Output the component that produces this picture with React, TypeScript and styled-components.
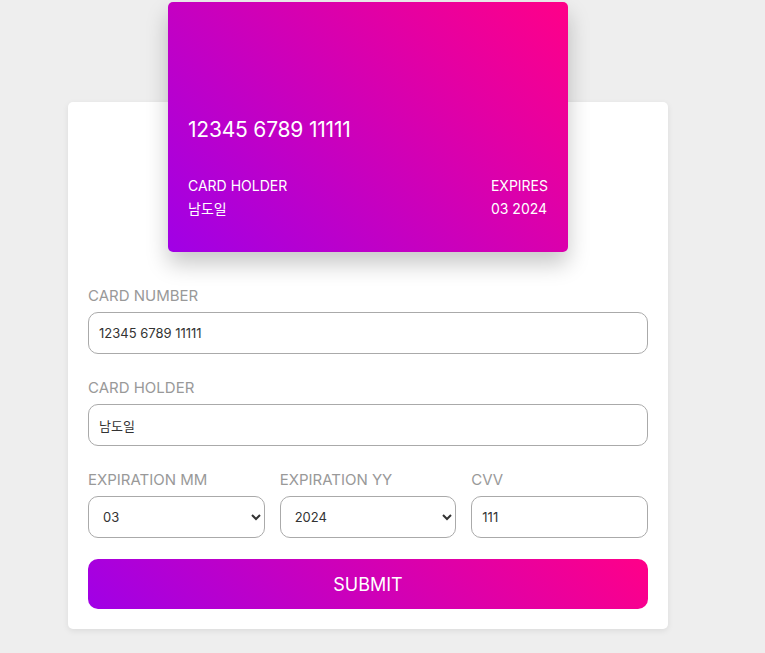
import React from "react";
import styled, { createGlobalStyle } from "styled-components";

const Global = createGlobalStyle`
  html, body { margin: 0; padding: 0; }
  body {
    background: #eeeeee;
    font-family: "Inter", "Noto Sans CJK KR", sans-serif;
  }
  * { box-sizing: border-box; }
`;

const gradient = "linear-gradient(45deg, #a000e6 0%, #ff0088 100%)";

const Page = styled.div`
  padding: 102px 0 24px 68px;
  min-height: 653px;
`;

const Container = styled.form`
  width: 600px;
  background: #fff;
  border-radius: 5px;
  padding: 20px;
  box-shadow: 0 2px 6px rgba(0, 0, 0, 0.08);
  display: flex;
  flex-direction: column;
`;

const Card = styled.div`
  width: 400px;
  height: 250px;
  margin: -120px auto 33px;
  border-radius: 5px;
  background: ${gradient};
  box-shadow: 0 12px 22px rgba(0, 0, 0, 0.22);
  color: #fff;
  padding: 20px 20px 33px;
  display: flex;
  flex-direction: column;
  justify-content: flex-end;
`;

const CardNumber = styled.div`
  font-size: 21px;
  line-height: 30px;
  letter-spacing: -0.2px;
  margin-bottom: 31px;
`;

const CardRow = styled.div`
  display: flex;
  justify-content: space-between;
`;

const CardCol = styled.div`
  display: flex;
  flex-direction: column;
  gap: 3px;
  font-size: 14px;
  line-height: 20px;
`;

const Group = styled.div`
  display: flex;
  flex-direction: column;
  gap: 5px;
  margin-bottom: 23px;
`;

const Row = styled.div`
  display: grid;
  grid-template-columns: 1fr 1fr 1fr;
  gap: 15px;
  margin-bottom: -2px;
`;

const Label = styled.label`
  font-size: 15px;
  line-height: 22px;
  color: #999;
`;

const Input = styled.input`
  height: 42px;
  width: 100%;
  border: 1px solid #aaa;
  border-radius: 10px;
  padding: 0 10px;
  font-family: "Inter", "Noto Sans CJK KR", sans-serif;
  font-size: 13px;
  color: #333;
  background: #fff;
  outline: none;
`;

const Select = styled.select`
  height: 42px;
  width: 100%;
  border: 1px solid #aaa;
  border-radius: 10px;
  padding: 0 10px;
  font-family: "Inter", "Noto Sans CJK KR", sans-serif;
  font-size: 13px;
  color: #333;
  background: #fff;
  outline: none;
`;

const Submit = styled.button`
  height: 50px;
  width: 100%;
  border: none;
  border-radius: 10px;
  background: ${gradient};
  color: #fff;
  font-family: "Inter", sans-serif;
  font-size: 18px;
  cursor: pointer;
`;

const months = ["01","02","03","04","05","06","07","08","09","10","11","12"];
const years = ["2024","2025","2026","2027","2028","2029","2030"];

export default function App() {
  return (
    <>
      <Global />
      <Page>
        <Container onSubmit={(e) => e.preventDefault()}>
          <Card>
            <CardNumber>12345 6789 11111</CardNumber>
            <CardRow>
              <CardCol>
                <span>CARD HOLDER</span>
                <span>남도일</span>
              </CardCol>
              <CardCol>
                <span>EXPIRES</span>
                <span>03 2024</span>
              </CardCol>
            </CardRow>
          </Card>
          <Group>
            <Label>CARD NUMBER</Label>
            <Input defaultValue="12345 6789 11111" />
          </Group>
          <Group>
            <Label>CARD HOLDER</Label>
            <Input defaultValue="남도일" />
          </Group>
          <Row>
            <Group>
              <Label>EXPIRATION MM</Label>
              <Select defaultValue="03">
                {months.map((m) => (
                  <option key={m}>{m}</option>
                ))}
              </Select>
            </Group>
            <Group>
              <Label>EXPIRATION YY</Label>
              <Select defaultValue="2024">
                {years.map((y) => (
                  <option key={y}>{y}</option>
                ))}
              </Select>
            </Group>
            <Group>
              <Label>CVV</Label>
              <Input defaultValue="111" />
            </Group>
          </Row>
          <Submit type="submit">SUBMIT</Submit>
        </Container>
      </Page>
    </>
  );
}
